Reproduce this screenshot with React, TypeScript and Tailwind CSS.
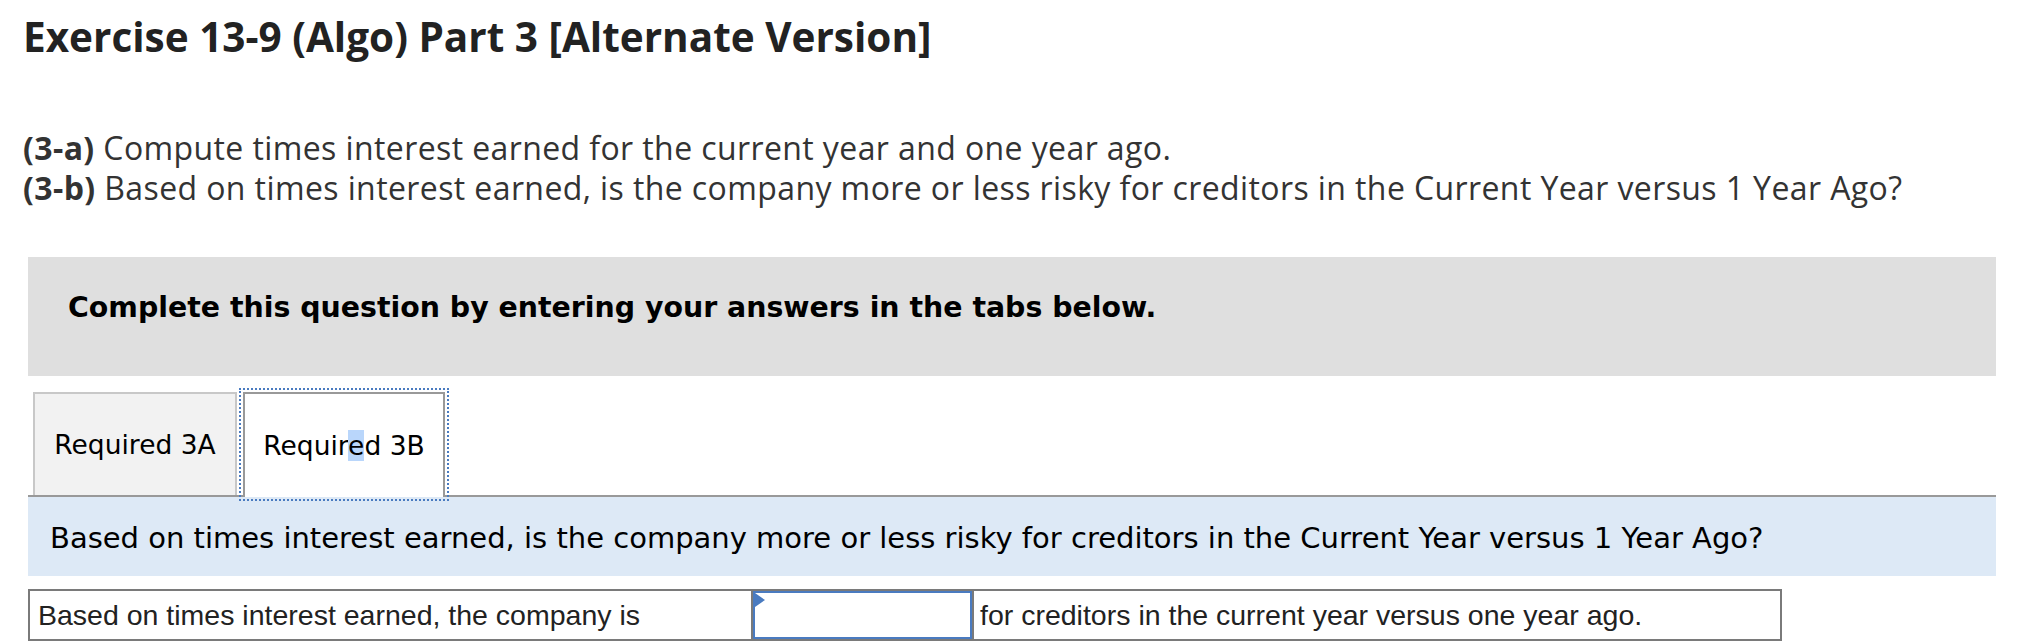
export default function App() {
  return (
    <div className="w-[2044px] h-[644px] overflow-hidden bg-white">
      {/* Title */}
      <h1 className="ml-[23px] pt-[13px] font-['Open_Sans',sans-serif] text-[40.5px] leading-[48px] font-bold text-[#222]">
        Exercise 13-9 (Algo) Part 3 [Alternate Version]
      </h1>

      {/* Instructions */}
      <div className="ml-[23px] mt-[67px] font-['Open_Sans',sans-serif] text-[32px] leading-[40px] tracking-[0.4px] text-[#333]">
        <p>
          <span className="font-bold">(3-a)</span> Compute times interest earned for the current year and one year ago.
        </p>
        <p>
          <span className="font-bold">(3-b)</span> Based on times interest earned, is the company more or less risky for creditors in the Current Year versus 1 Year Ago?
        </p>
      </div>

      <div className="ml-[28px] mt-[49px] w-[1968px] font-['DejaVu_Sans',Verdana,sans-serif]">
        {/* Banner */}
        <div className="h-[119px] bg-[#dfdfdf] pl-[40px] pt-[33px]">
          <p className="text-[28.4px] leading-[36px] font-bold text-black">
            Complete this question by entering your answers in the tabs below.
          </p>
        </div>

        {/* Tabs */}
        <div className="flex items-end pt-[16px] pl-[5px] border-b-2 border-[#999]">
          <button className="w-[204px] h-[103px] border-2 border-b-0 border-[#c8c8c8] bg-[#f2f2f2] flex items-center justify-center text-[26.5px] text-black">
            Required 3A
          </button>
          <button className="relative -mb-[2px] ml-[6px] w-[202px] h-[105px] border-2 border-b-0 border-[#999] bg-white flex items-center justify-center text-[26.5px] text-black outline-2 outline-dotted outline-[#4a7bc0] outline-offset-[2px]">
            <span>
              Requir<span className="bg-[#b9d6fb]">e</span>d 3B
            </span>
          </button>
        </div>

        {/* Question */}
        <div className="h-[79px] bg-[#dde9f6] pl-[22px] pt-[23px]">
          <p className="text-[29px] leading-[36px] text-black">
            Based on times interest earned, is the company more or less risky for creditors in the Current Year versus 1 Year Ago?
          </p>
        </div>

        {/* Answer row */}
        <div className="mt-[13px] w-[1754px] h-[52px] flex border-2 border-[#7a7a7a] font-['Liberation_Sans',Arial,sans-serif] text-[28.5px] text-[#222]">
          <div className="w-[721px] flex items-center pl-[8px]">
            Based on times interest earned, the company is
          </div>
          <div className="relative w-[223px] border-x-2 border-[#7a7a7a]">
            <div className="h-full w-full border-2 border-[#4a7bc0] bg-white" />
            <svg className="absolute left-[2px] top-[2px]" width="10" height="14" viewBox="0 0 10 14">
              <polygon points="0,0 10,7 0,14" fill="#4a7bc0" />
            </svg>
          </div>
          <div className="flex-1 flex items-center pl-[6px]">
            for creditors in the current year versus one year ago.
          </div>
        </div>
      </div>
    </div>
  )
}
